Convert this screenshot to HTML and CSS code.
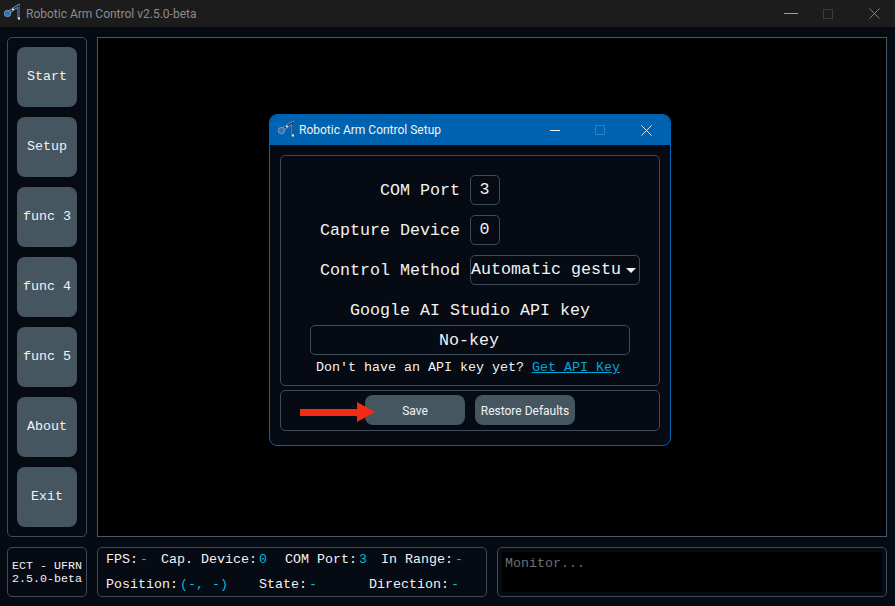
FILE: index.html
```html
<!DOCTYPE html>
<html lang="en">
<head>
<meta charset="UTF-8" />
<title>Robotic Arm Control v2.5.0-beta</title>
<link rel="stylesheet" href="styles.css">
</head>
<body>

<svg width="0" height="0" class="defs">
  <symbol id="arm" viewBox="0 0 16 16">
    <path d="M4 9 L10 4.5 L15 1.5 V14.5" fill="none" stroke="#6f97c6" stroke-width="3"/>
    <path d="M4 9 L10 4.5 L15 1.5 V14.5" fill="none" stroke="#16263c" stroke-width="1.2"/>
    <circle cx="3.5" cy="9.5" r="3.2" fill="#3b6ea8" stroke="#86abd6" stroke-width="0.8"/>
    <circle cx="9" cy="5.5" r="1" fill="#e4edf6"/>
    <circle cx="15" cy="14.5" r="1.2" fill="#e4edf6"/>
  </symbol>
</svg>

<header class="titlebar">
  <svg class="app-icon"><use href="#arm"/></svg>
  <span class="title">Robotic Arm Control v2.5.0-beta</span>
  <div class="win-controls">
    <span class="min"></span>
    <span class="max"></span>
    <svg class="close" viewBox="0 0 12 12"><path d="M0.5 0.5 L11.5 11.5 M11.5 0.5 L0.5 11.5"/></svg>
  </div>
</header>

<div class="app">
  <div class="top-row">
    <nav class="sidebar panel">
      <button class="side-btn">Start</button>
      <button class="side-btn">Setup</button>
      <button class="side-btn">func 3</button>
      <button class="side-btn">func 4</button>
      <button class="side-btn">func 5</button>
      <button class="side-btn">About</button>
      <button class="side-btn">Exit</button>
    </nav>
    <main class="viewport"></main>
  </div>
  <div class="bottom-row">
    <div class="version panel">ECT - UFRN<br>2.5.0-beta</div>
    <div class="status panel">
      <div class="status-row">
        <span class="field">FPS:<b>-</b></span>
        <span class="field cap">Cap. Device:<b>0</b></span>
        <span class="field com">COM Port:<b>3</b></span>
        <span class="field range">In Range:<b>-</b></span>
      </div>
      <div class="status-row">
        <span class="field">Position:<b>(-, -)</b></span>
        <span class="field state">State:<b>-</b></span>
        <span class="field direction">Direction:<b>-</b></span>
      </div>
    </div>
    <div class="monitor panel"><div class="monitor-text">Monitor...</div></div>
  </div>
</div>

<section class="dialog">
  <div class="dialog-title">
    <svg class="app-icon"><use href="#arm"/></svg>
    <span class="title">Robotic Arm Control Setup</span>
    <div class="win-controls">
      <span class="min"></span>
      <span class="max"></span>
      <svg class="close" viewBox="0 0 12 12"><path d="M0.5 0.5 L11.5 11.5 M11.5 0.5 L0.5 11.5"/></svg>
    </div>
  </div>
  <div class="dialog-body">
    <div class="form panel">
      <div class="form-row"><label>COM Port</label><div class="input small">3</div></div>
      <div class="form-row"><label>Capture Device</label><div class="input small">0</div></div>
      <div class="form-row">
        <label>Control Method</label>
        <div class="input select"><span class="select-text">Automatic gestu</span><span class="caret"></span></div>
      </div>
      <div class="key-label">Google AI Studio API key</div>
      <div class="input key">No-key</div>
      <div class="hint">Don't have an API key yet? <a href="#">Get API Key</a></div>
    </div>
    <div class="actions panel">
      <button class="action-btn">Save</button>
      <button class="action-btn">Restore Defaults</button>
    </div>
  </div>
  <svg class="arrow" viewBox="0 0 75 20"><path d="M0 7 H57 V0 L75 10 L57 20 V14 H0 Z"/></svg>
</section>

</body>
</html>
```

FILE: styles.css
```css
* {
  box-sizing: border-box;
}
body {
  margin: 0;
  width: 895px;
  height: 606px;
  overflow: hidden;
  background: #060a12;
  color: #f2f2f2;
  font-family: "Liberation Mono", monospace;
  font-size: 13.33px;
}
.defs {
  position: absolute;
}
.panel {
  border: 1px solid #3d4c57;
  border-radius: 5px;
}

/* window title bars */
.titlebar {
  display: flex;
  align-items: center;
  height: 27px;
  padding-left: 4px;
  background: #1c1c1c;
  color: #8c8c8c;
  font-family: Roboto, sans-serif;
  font-size: 12px;
}
.app-icon {
  width: 16px;
  height: 16px;
  margin-right: 6px;
  margin-bottom: 3px;
}
.win-controls {
  display: flex;
  align-items: center;
  margin-left: auto;
  width: 111px;
}
.win-controls .min {
  width: 14px;
  height: 1px;
  background: #a0a0a0;
}
.win-controls .max {
  width: 10px;
  height: 10px;
  margin-left: 25px;
  border: 1px solid #3a3a3a;
}
.win-controls .close {
  width: 11px;
  height: 11px;
  margin-left: 36px;
  fill: none;
  stroke: #8a8a8a;
  stroke-width: 1;
}

/* main layout */
.app {
  padding: 10px 8px 9px 7px;
  display: flex;
  flex-direction: column;
  gap: 10px;
}
.top-row {
  display: flex;
  gap: 10px;
  height: 500px;
}
.sidebar {
  width: 80px;
  padding: 9px;
  display: flex;
  flex-direction: column;
  gap: 10px;
}
.side-btn {
  width: 60px;
  height: 60px;
  border: 0;
  border-radius: 8px;
  background: #465660;
  color: #f2f2f2;
  font-family: "Liberation Mono", monospace;
  font-size: 13.33px;
  padding: 0 0 2px;
}
.viewport {
  flex: 1;
  background: #000;
  border: 1px solid #47586a;
}
.bottom-row {
  display: flex;
  gap: 10px;
  height: 50px;
}
.version {
  width: 80px;
  font-size: 11.67px;
  line-height: 13px;
  text-align: center;
  padding-top: 12px;
}
.status {
  width: 390px;
  padding: 4px 8px;
  display: flex;
  flex-direction: column;
  gap: 9px;
}
.status-row {
  display: flex;
  height: 16px;
  line-height: 16px;
}
.field b {
  font-weight: normal;
  color: #00bcd4;
  margin-left: 2px;
}
.field.cap { margin-left: 13px; }
.field.com { margin-left: 18px; }
.field.range { margin-left: 14px; }
.field.state { margin-left: 31px; }
.field.direction { margin-left: 52px; }
.monitor {
  flex: 1;
  padding: 4px;
}
.monitor-text {
  height: 40px;
  background: #000;
  border-radius: 4px;
  color: #6b7276;
  padding: 4px 3px;
}

/* setup dialog */
.dialog {
  position: absolute;
  left: 269px;
  top: 114px;
  width: 402px;
  height: 332px;
  background: #060a12;
  border: 1px solid #0063b1;
  border-radius: 8px;
  overflow: hidden;
}
.dialog-title {
  display: flex;
  align-items: center;
  height: 30px;
  padding-left: 8px;
  background: #0063b1;
  color: #f2f2f2;
  font-family: Roboto, sans-serif;
  font-size: 12px;
}
.dialog-title .app-icon {
  margin-right: 5px;
}
.dialog-title .win-controls {
  width: 120px;
}
.dialog-title .min {
  width: 10px;
  background: #f2f2f2;
}
.dialog-title .max {
  margin-left: 35px;
  border-color: #2b7fc4;
}
.dialog-title .close {
  margin-left: 36px;
  stroke: #f2f2f2;
}
.dialog-body {
  padding: 10px;
  display: flex;
  flex-direction: column;
  gap: 4px;
}
.form {
  height: 231px;
  padding: 19px 19px 0 29px;
  display: flex;
  flex-direction: column;
  align-items: center;
  font-size: 16.67px;
}
.form-row {
  align-self: stretch;
  display: flex;
  align-items: center;
  gap: 10px;
  margin-bottom: 10px;
}
.form-row label {
  width: 150px;
  text-align: right;
}
.input {
  height: 30px;
  line-height: 28px;
  border: 1px solid #3d4c57;
  border-radius: 5px;
  text-align: center;
}
.input.small {
  width: 30px;
  padding-right: 1px;
}
.input.select {
  width: 170px;
  display: flex;
  text-align: left;
}
.select-text {
  width: 152px;
  overflow: hidden;
  white-space: nowrap;
}
.caret {
  align-self: center;
  margin-left: 3px;
  border-left: 5px solid transparent;
  border-right: 5px solid transparent;
  border-top: 5px solid #f2f2f2;
}
.key-label {
  margin: 6px 0 0 -10px;
  height: 20px;
  line-height: 20px;
}
.input.key {
  width: 320px;
  margin: 4px 0 0 -10px;
  padding-right: 2px;
  line-height: 29px;
}
.hint {
  margin: 5px 0 0 -14px;
  font-size: 13.33px;
  line-height: 16px;
}
.hint a {
  color: #00a8d8;
}
.actions {
  height: 41px;
  padding: 4px 0 0 84px;
  display: flex;
  gap: 10px;
}
.action-btn {
  width: 100px;
  height: 30px;
  border: 0;
  border-radius: 8px;
  background: #465660;
  color: #f2f2f2;
  font-family: Roboto, sans-serif;
  font-size: 12px;
  padding: 2px 0 0;
}
.arrow {
  position: absolute;
  left: 30px;
  top: 287px;
  width: 75px;
  height: 20px;
  fill: #f22c14;
}
```
